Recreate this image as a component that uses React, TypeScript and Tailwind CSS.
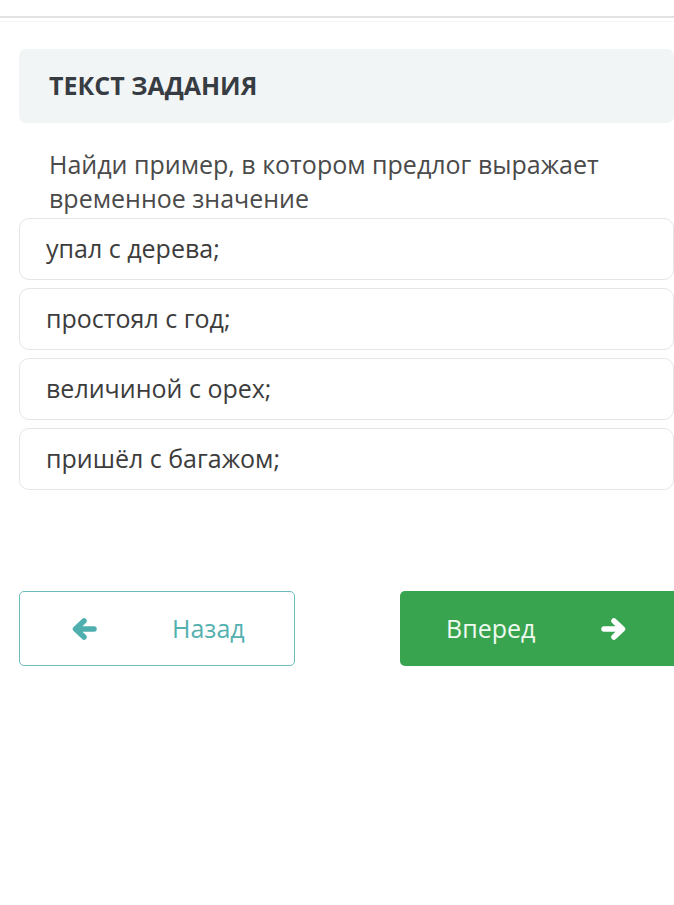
import React from "react";

const options = ["упал с дерева;", "простоял с год;", "величиной с орех;", "пришёл с багажом;"];

function Arrow({ dir, color }: { dir: "left" | "right"; color: string }) {
  return (
    <svg width="26" height="24" viewBox="0 0 26 24" style={{ transform: dir === "right" ? "scaleX(-1)" : undefined }}>
      <path d="M23 12 H5 M13 4 L4.5 12 L13 20" fill="none" stroke={color} strokeWidth="5.5" strokeLinecap="round" strokeLinejoin="round" />
    </svg>
  );
}

export default function App() {
  return (
    <div className="w-[674px] h-[905px] bg-white overflow-hidden" style={{ fontFamily: '"Open Sans", "Noto Sans", sans-serif' }}>
      <div className="h-[18px] border-b-2 border-[#e2e2e2]" />
      <div className="h-[4px] border-b border-[#f6f6f6]" />
      <div className="pl-[19px] pt-[27px]">
        <div className="h-[74px] rounded-[7px] bg-[#f2f5f6] flex items-center pl-[30px]">
          <span className="text-[25px] font-bold text-[#373c43]">ТЕКСТ ЗАДАНИЯ</span>
        </div>
        <div className="pl-[30px] pt-[24px] text-[25px] leading-[34px] text-[#4a4a4a]">
          Найди пример, в котором предлог выражает временное значение
        </div>
        <div className="flex flex-col gap-[8px] mt-[3px]">
          {options.map((o) => (
            <div key={o} className="h-[62px] rounded-[10px] border border-[#e3e6e8] flex items-center pl-[26px] text-[25px] text-[#3c3c3c]">
              {o}
            </div>
          ))}
        </div>
        <div className="flex mt-[101px]">
          <div className="w-[276px] h-[75px] rounded-[5px] border border-[#6cbcbc] flex items-center">
            <div className="ml-[51px]"><Arrow dir="left" color="#4fafaf" /></div>
            <span className="ml-[75px] text-[25px] text-[#55b0b0]">Назад</span>
          </div>
          <div className="ml-[105px] flex-1 -mr-[4px] h-[75px] rounded-l-[5px] bg-[#39a450] flex items-center">
            <span className="ml-[46px] text-[25px] text-[#eef9ef]">Вперед</span>
            <div className="ml-[66px]"><Arrow dir="right" color="#ffffff" /></div>
          </div>
        </div>
      </div>
    </div>
  );
}
